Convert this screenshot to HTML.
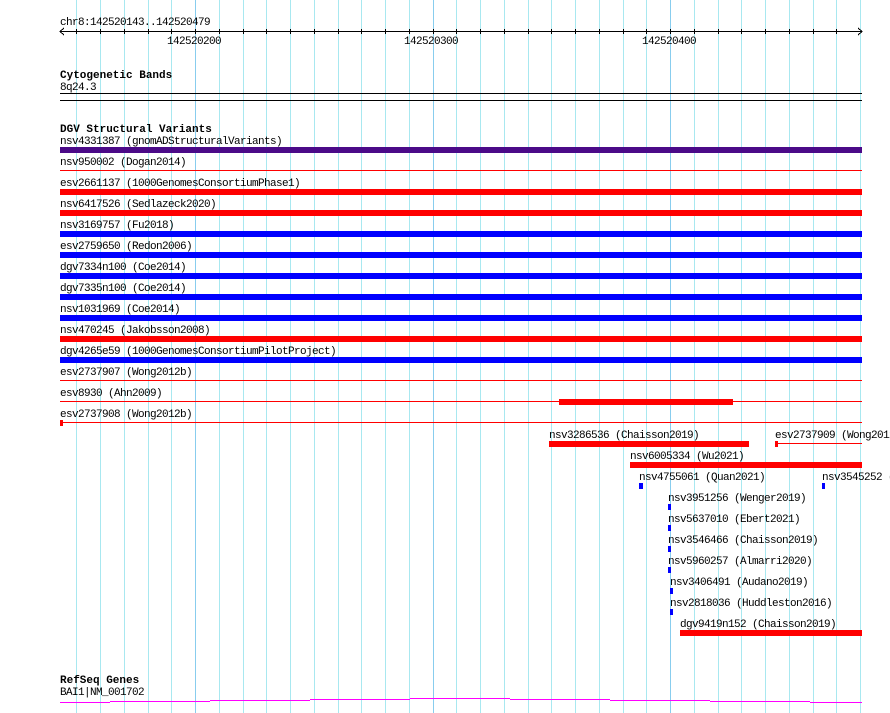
<!DOCTYPE html>
<html><head><meta charset="utf-8"><style>
html,body{margin:0;padding:0;background:#fff;}
svg{display:block}
text{font-family:"Liberation Mono","DejaVu Sans Mono",monospace;font-size:11px;letter-spacing:-0.6px;fill:#000}
.b{font-weight:bold;font-size:11px;letter-spacing:0}
</style></head><body>
<svg width="890" height="713" viewBox="0 0 890 713" xmlns="http://www.w3.org/2000/svg" shape-rendering="crispEdges">
<g fill="#a8e8f0">
<rect x="76" y="0" width="1" height="713"/><rect x="100" y="0" width="1" height="713"/><rect x="124" y="0" width="1" height="713"/><rect x="148" y="0" width="1" height="713"/><rect x="171" y="0" width="1" height="713"/><rect x="219" y="0" width="1" height="713"/><rect x="243" y="0" width="1" height="713"/><rect x="266" y="0" width="1" height="713"/><rect x="290" y="0" width="1" height="713"/><rect x="314" y="0" width="1" height="713"/><rect x="338" y="0" width="1" height="713"/><rect x="361" y="0" width="1" height="713"/><rect x="385" y="0" width="1" height="713"/><rect x="409" y="0" width="1" height="713"/><rect x="456" y="0" width="1" height="713"/><rect x="480" y="0" width="1" height="713"/><rect x="504" y="0" width="1" height="713"/><rect x="528" y="0" width="1" height="713"/><rect x="551" y="0" width="1" height="713"/><rect x="575" y="0" width="1" height="713"/><rect x="599" y="0" width="1" height="713"/><rect x="623" y="0" width="1" height="713"/><rect x="646" y="0" width="1" height="713"/><rect x="694" y="0" width="1" height="713"/><rect x="718" y="0" width="1" height="713"/><rect x="741" y="0" width="1" height="713"/><rect x="765" y="0" width="1" height="713"/><rect x="789" y="0" width="1" height="713"/><rect x="813" y="0" width="1" height="713"/><rect x="836" y="0" width="1" height="713"/><rect x="860" y="0" width="1" height="713"/>
</g>
<g fill="#88cdee"><rect x="195" y="0" width="1" height="713"/><rect x="433" y="0" width="1" height="713"/><rect x="670" y="0" width="1" height="713"/></g>
<text x="60" y="25">chr8:142520143..142520479</text>
<rect x="60" y="31" width="802" height="1" fill="#000"/>
<path d="M64 28 L60 31.5 L64 35 M858 28 L862 31.5 L858 35" stroke="#000" fill="none" stroke-width="1"/>
<g fill="#000">
<rect x="76" y="29" width="1" height="5"/><rect x="100" y="29" width="1" height="5"/><rect x="124" y="29" width="1" height="5"/><rect x="148" y="29" width="1" height="5"/><rect x="171" y="29" width="1" height="5"/><rect x="195" y="29" width="1" height="5"/><rect x="219" y="29" width="1" height="5"/><rect x="243" y="29" width="1" height="5"/><rect x="266" y="29" width="1" height="5"/><rect x="290" y="29" width="1" height="5"/><rect x="314" y="29" width="1" height="5"/><rect x="338" y="29" width="1" height="5"/><rect x="361" y="29" width="1" height="5"/><rect x="385" y="29" width="1" height="5"/><rect x="409" y="29" width="1" height="5"/><rect x="433" y="29" width="1" height="5"/><rect x="456" y="29" width="1" height="5"/><rect x="480" y="29" width="1" height="5"/><rect x="504" y="29" width="1" height="5"/><rect x="528" y="29" width="1" height="5"/><rect x="551" y="29" width="1" height="5"/><rect x="575" y="29" width="1" height="5"/><rect x="599" y="29" width="1" height="5"/><rect x="623" y="29" width="1" height="5"/><rect x="646" y="29" width="1" height="5"/><rect x="670" y="29" width="1" height="5"/><rect x="694" y="29" width="1" height="5"/><rect x="718" y="29" width="1" height="5"/><rect x="741" y="29" width="1" height="5"/><rect x="765" y="29" width="1" height="5"/><rect x="789" y="29" width="1" height="5"/><rect x="813" y="29" width="1" height="5"/><rect x="836" y="29" width="1" height="5"/>
</g>
<text x="167" y="44">142520200</text>
<text x="404" y="44">142520300</text>
<text x="642" y="44">142520400</text>
<text class="b" x="60" y="78">Cytogenetic Bands</text>
<text x="60" y="90">8q24.3</text>
<rect x="60" y="93" width="802" height="1" fill="#000"/>
<rect x="60" y="100" width="802" height="1" fill="#000"/>
<text class="b" x="60" y="132">DGV Structural Variants</text>

<text x="60" y="144">nsv4331387 (gnomADStructuralVariants)</text>
<rect x="60" y="147" width="802" height="6" fill="#4b0a88"/>
<text x="60" y="165">nsv950002 (Dogan2014)</text>
<rect x="60" y="170" width="802" height="1" fill="#f00"/>
<text x="60" y="186">esv2661137 (1000GenomesConsortiumPhase1)</text>
<rect x="60" y="189" width="802" height="6" fill="#f00"/>
<text x="60" y="207">nsv6417526 (Sedlazeck2020)</text>
<rect x="60" y="210" width="802" height="6" fill="#f00"/>
<text x="60" y="228">nsv3169757 (Fu2018)</text>
<rect x="60" y="231" width="802" height="6" fill="#00f"/>
<text x="60" y="249">esv2759650 (Redon2006)</text>
<rect x="60" y="252" width="802" height="6" fill="#00f"/>
<text x="60" y="270">dgv7334n100 (Coe2014)</text>
<rect x="60" y="273" width="802" height="6" fill="#00f"/>
<text x="60" y="291">dgv7335n100 (Coe2014)</text>
<rect x="60" y="294" width="802" height="6" fill="#00f"/>
<text x="60" y="312">nsv1031969 (Coe2014)</text>
<rect x="60" y="315" width="802" height="6" fill="#00f"/>
<text x="60" y="333">nsv470245 (Jakobsson2008)</text>
<rect x="60" y="336" width="802" height="6" fill="#f00"/>
<text x="60" y="354">dgv4265e59 (1000GenomesConsortiumPilotProject)</text>
<rect x="60" y="357" width="802" height="6" fill="#00f"/>
<text x="60" y="375">esv2737907 (Wong2012b)</text>
<rect x="60" y="380" width="802" height="1" fill="#f00"/>
<text x="60" y="396">esv8930 (Ahn2009)</text>
<rect x="60" y="401" width="802" height="1" fill="#f00"/>
<rect x="559" y="399" width="174" height="6" fill="#f00"/>
<text x="60" y="417">esv2737908 (Wong2012b)</text>
<rect x="60" y="422" width="802" height="1" fill="#f00"/>
<rect x="60" y="420" width="3" height="6" fill="#f00"/>

<text x="549" y="438">nsv3286536 (Chaisson2019)</text>
<rect x="549" y="441" width="200" height="6" fill="#f00"/>
<text x="775" y="438">esv2737909 (Wong2012b)</text>
<rect x="775" y="443" width="87" height="1" fill="#f00"/>
<rect x="775" y="441" width="3" height="6" fill="#f00"/>
<text x="630" y="459">nsv6005334 (Wu2021)</text>
<rect x="630" y="462" width="232" height="6" fill="#f00"/>
<text x="639" y="480">nsv4755061 (Quan2021)</text>
<rect x="639" y="483" width="4" height="6" fill="#00f"/>
<text x="822" y="480">nsv3545252 (</text>
<rect x="822" y="483" width="3" height="6" fill="#00f"/>
<text x="668" y="501">nsv3951256 (Wenger2019)</text>
<rect x="668" y="504" width="3" height="6" fill="#00f"/>
<text x="668" y="522">nsv5637010 (Ebert2021)</text>
<rect x="668" y="525" width="3" height="6" fill="#00f"/>
<text x="668" y="543">nsv3546466 (Chaisson2019)</text>
<rect x="668" y="546" width="3" height="6" fill="#00f"/>
<text x="668" y="564">nsv5960257 (Almarri2020)</text>
<rect x="668" y="567" width="3" height="6" fill="#00f"/>
<text x="670" y="585">nsv3406491 (Audano2019)</text>
<rect x="670" y="588" width="3" height="6" fill="#00f"/>
<text x="670" y="606">nsv2818036 (Huddleston2016)</text>
<rect x="670" y="609" width="3" height="6" fill="#00f"/>
<text x="680" y="627">dgv9419n152 (Chaisson2019)</text>
<rect x="680" y="630" width="182" height="6" fill="#f00"/>
<text class="b" x="60" y="683">RefSeq Genes</text>
<text x="60" y="695">BAI1|NM_001702</text>
<g fill="#f0f">
<rect x="60" y="702" width="50" height="1"/><rect x="110" y="701" width="100" height="1"/><rect x="210" y="700" width="100" height="1"/><rect x="310" y="699" width="100" height="1"/><rect x="410" y="698" width="100" height="1"/><rect x="510" y="699" width="100" height="1"/><rect x="610" y="700" width="100" height="1"/><rect x="710" y="701" width="100" height="1"/><rect x="810" y="702" width="52" height="1"/>
</g>
</svg>
</body></html>
